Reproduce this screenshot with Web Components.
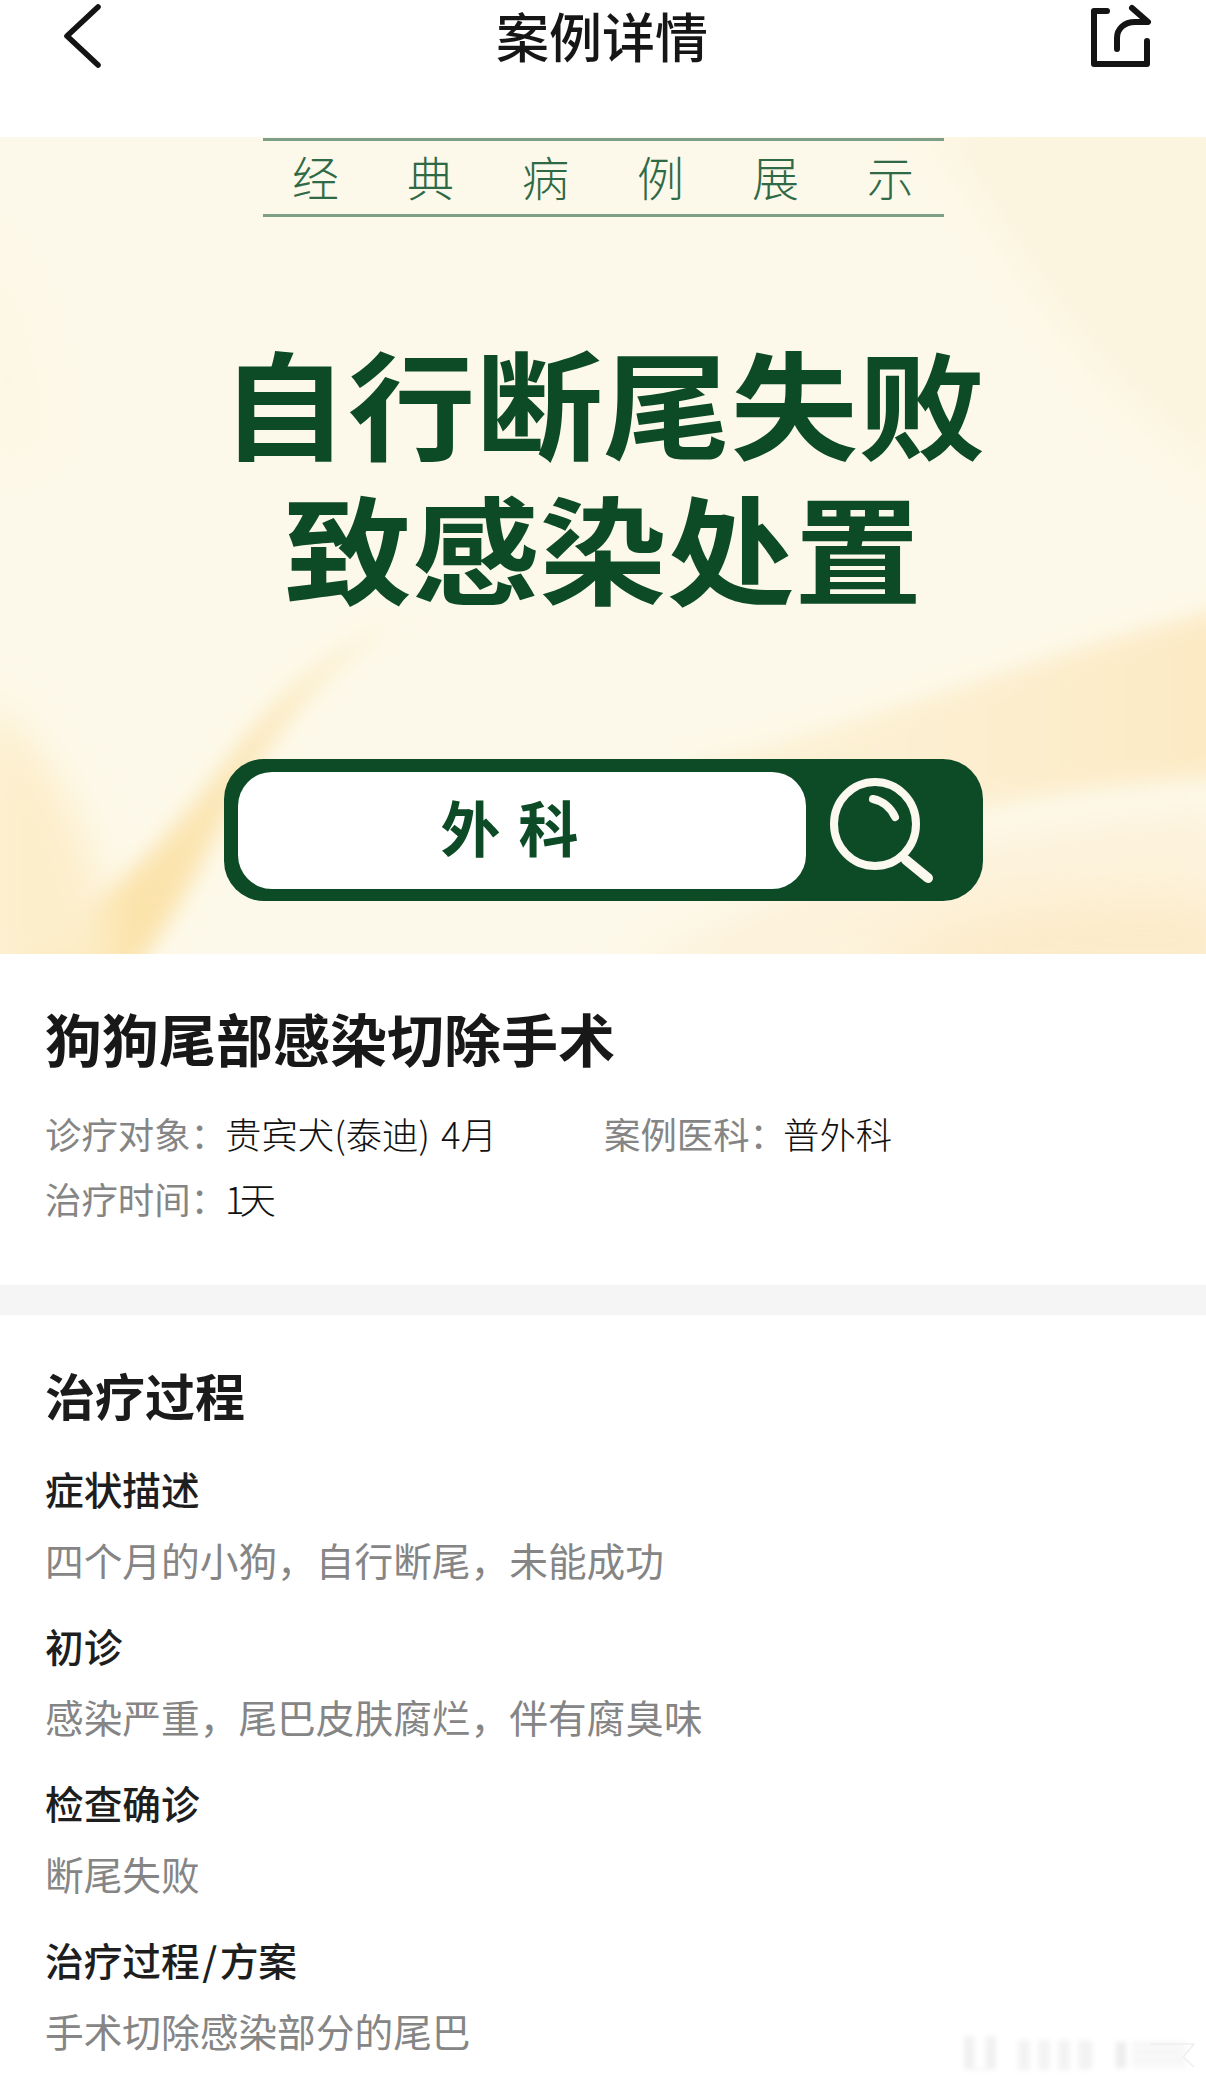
<!DOCTYPE html>
<html lang="zh-CN">
<head>
<meta charset="utf-8">
<title>案例详情</title>
<style>
html,body{margin:0;padding:0;background:#fff}
body{width:1206px;height:2082px;overflow:hidden;position:relative;font-family:"Noto Sans CJK SC","Noto Sans",sans-serif;color:#1c1c1c}
</style>
</head>
<body>
<case-page>
  <top-bar>案例详情</top-bar>
  <case-banner></case-banner>
  <case-summary title-text="狗狗尾部感染切除手术"></case-summary>
  <section-gap></section-gap>
  <treat-process heading="治疗过程">
    <treat-item heading="症状描述">四个月的小狗，自行断尾，未能成功</treat-item>
    <treat-item heading="初诊">感染严重，尾巴皮肤腐烂，伴有腐臭味</treat-item>
    <treat-item heading="检查确诊">断尾失败</treat-item>
    <treat-item heading="治疗过程&#8202;/&#8202;方案">手术切除感染部分的尾巴</treat-item>
  </treat-process>
  <ghost-mark></ghost-mark>
</case-page>
<script>
function def(name, html, init){
  customElements.define(name, class extends HTMLElement{
    constructor(){super();this.attachShadow({mode:'open'}).innerHTML=html;}
    connectedCallback(){ if(init) init(this); }
  });
}
def('case-page',`<style>:host{display:flex;flex-direction:column;width:1206px;height:2082px;position:relative;overflow:hidden}</style><slot></slot>`);

def('top-bar',`<style>
:host{display:flex;justify-content:space-between;align-items:flex-start;height:137px;box-sizing:border-box;padding:0 46px 0 50px;position:relative;background:#fff}
svg{display:block;flex:none}
.t{font-size:53px;line-height:70px;font-weight:500;color:#161616;white-space:nowrap;flex:1;text-align:center;padding-left:4px;box-sizing:border-box}
</style>
<svg width="70" height="75" viewBox="50 0 70 75" fill="none" stroke="#141414" stroke-width="5.6" stroke-linecap="round" stroke-linejoin="round"><path d="M98 7 L67 36 L98 65"/></svg>
<div class="t"><slot></slot></div>
<svg width="80" height="75" viewBox="1080 0 80 75" fill="none" stroke="#141414" stroke-width="6" stroke-linecap="round" stroke-linejoin="round"><path d="M1107 11 H1094 V64 H1147 V41"/><path d="M1132 8 L1148 22 H1135 C1124 22 1117 29 1117 38 V49"/></svg>`);

def('case-banner',`<style>
:host{display:flex;flex-direction:column;align-items:center;height:817px;position:relative;overflow:hidden;background:#fdf9ea}
.bg{position:absolute;inset:0;width:100%;height:100%}
.in{position:relative;display:flex;flex-direction:column;align-items:center;width:100%}
.sub{margin-top:1px;width:681px;height:79px;box-sizing:border-box;border-top:3px solid #7d9f88;border-bottom:3px solid #7d9f88;display:flex;justify-content:center;align-items:center;gap:68px;font-size:47px;line-height:60px;color:#2f6a47;font-weight:300;padding-bottom:4px}
.big{margin-top:110px;display:flex;flex-direction:column;align-items:center;font-size:127.5px;line-height:145px;font-weight:700;color:#0d4b27;white-space:nowrap}
.big span{display:block;transform:scaleY(.92)}
.pill{margin-top:142px;width:759px;height:142px;box-sizing:border-box;padding:13px 14px;background:#0d4b27;border-radius:40px;display:flex;align-items:stretch}
.box{width:568px;height:117px;background:#fff;border-radius:34px;display:flex;align-items:center;justify-content:center;gap:18px;font-size:60px;font-weight:700;color:#0d4b27;line-height:107px;padding:0 24px 10px 0;box-sizing:border-box}
.mag{display:block;margin-left:17px;margin-top:2px}
</style>
<svg class="bg" viewBox="0 0 1206 817" preserveAspectRatio="none">
<defs>
<filter id="b1" x="-40%" y="-40%" width="180%" height="180%"><feGaussianBlur stdDeviation="22"/></filter>
<filter id="b2" x="-30%" y="-30%" width="160%" height="160%"><feGaussianBlur stdDeviation="11"/></filter>
<linearGradient id="g1" x1="0" y1="1" x2="1" y2="0"><stop offset="0" stop-color="#fbdf9f"/><stop offset=".6" stop-color="#fbe6b6"/><stop offset="1" stop-color="#fcf0d2"/></linearGradient>
<linearGradient id="g2" x1="0" y1="0" x2="1" y2="0"><stop offset="0" stop-color="#fdf3d9"/><stop offset="1" stop-color="#fce7bd"/></linearGradient>
</defs>
<path d="M920 -20 C1010 100 1060 230 1230 350 V-20Z" fill="#fbf4de" filter="url(#b1)"/>
<path d="M-20 100 C20 140 30 220 50 300 L-20 330Z" fill="#fcf4da" filter="url(#b1)" opacity=".45"/>
<path d="M-20 840 C90 790 170 700 230 620 C290 540 350 500 400 485 C320 530 260 610 205 720 C175 780 150 810 130 840Z" fill="url(#g1)" filter="url(#b2)"/>
<path d="M-20 560 C60 620 90 680 120 840 H-20Z" fill="#fdeecb" filter="url(#b1)"/>
<path d="M680 625 C860 590 1030 520 1230 470 V640 C1050 650 900 680 800 730 C770 680 730 650 680 625Z" fill="url(#g2)" filter="url(#b2)" opacity=".85"/>
<path d="M620 840 C760 740 980 690 1230 670 V840Z" fill="#fdf2da" filter="url(#b1)"/>
<path d="M860 840 C950 770 1080 760 1230 770 V840Z" fill="#fbe9c4" filter="url(#b1)" opacity=".8"/>
</svg>
<div class="in">
  <div class="sub"><span>经</span><span>典</span><span>病</span><span>例</span><span>展</span><span>示</span></div>
  <div class="big"><span>自行断尾失败</span><span>致感染处置</span></div>
  <div class="pill">
    <div class="box"><span>外</span><span>科</span></div>
    <svg class="mag" width="112" height="116" viewBox="0 0 112 116" fill="none" stroke="#fbf8ef" stroke-linecap="round"><ellipse cx="52" cy="50" rx="41" ry="42" stroke-width="8"/><path d="M83 86 L105 104" stroke-width="10"/><path d="M50 25 C60 27 68 34 72 43" stroke-width="8"/></svg>
  </div>
</div>`);

def('case-summary',`<style>
:host{display:block;height:331px;box-sizing:border-box;padding:48px 45px 0;background:#fff}
h1{margin:0;font-size:57px;line-height:70px;font-weight:700;color:#181818;white-space:nowrap}
.grid{margin-top:29px;display:grid;grid-template-columns:559px auto;grid-auto-rows:65px;font-size:36.4px;line-height:65px}
.f{display:flex;white-space:nowrap}
.l{width:180px;flex:none;color:#858585;font-weight:400}
.l2{width:179px}
.v{color:#111;font-weight:300;word-spacing:3px}
.n{letter-spacing:-5px}
</style>
<h1 id="h"></h1>
<div class="grid">
  <div class="f"><span class="l">诊疗对象：</span><span class="v">贵宾犬(泰迪) 4月</span></div>
  <div class="f"><span class="l l2">案例医科：</span><span class="v">普外科</span></div>
  <div class="f"><span class="l">治疗时间：</span><span class="v"><span class="n">1</span>天</span></div>
</div>`, el=>{el.shadowRoot.getElementById('h').textContent=el.getAttribute('title-text');});

def('section-gap',`<style>:host{display:block;height:30px;background:#f5f5f5}</style>`);

def('treat-process',`<style>
:host{display:flex;flex-direction:column;box-sizing:border-box;padding:44px 45px 0;background:#fff;gap:26px}
h2{margin:0 0 3px;font-size:50px;line-height:70px;font-weight:700;color:#1b1b1b}
</style>
<h2 id="h"></h2><slot></slot>`, el=>{el.shadowRoot.getElementById('h').textContent=el.getAttribute('heading');});

def('treat-item',`<style>
:host{display:flex;flex-direction:column;gap:11px}
h3{margin:0;font-size:38.7px;line-height:60px;font-weight:500;color:#1e1e1e;white-space:nowrap}
.b{font-size:38.7px;line-height:60px;color:#858585;font-weight:400;white-space:nowrap}
</style>
<h3 id="h"></h3><div class="b"><slot></slot></div>`, el=>{el.shadowRoot.getElementById('h').textContent=el.getAttribute('heading');});

def('ghost-mark',`<style>
:host{position:absolute;right:0;bottom:0;width:246px;height:62px;overflow:hidden;display:block}
.bars{position:absolute;left:0;top:14px;width:240px;height:36px;filter:blur(2.5px);opacity:.4;
background:
 linear-gradient(#fff,#fff) 14px 0/12px 34px no-repeat,
 linear-gradient(#dcdcdc,#dcdcdc) 4px 2px/32px 34px no-repeat,
 repeating-linear-gradient(90deg,#e2e2e2 0 12px,transparent 12px 20px) 58px 6px/72px 30px no-repeat,
 linear-gradient(#d2d2d2,#d2d2d2) 124px 8px/8px 26px no-repeat,
 linear-gradient(#d2d2d2,#d2d2d2) 156px 8px/10px 26px no-repeat,
 repeating-linear-gradient(#e4e4e4 0 4px,#f7f7f7 4px 8px) 172px 8px/54px 26px no-repeat}
svg{position:absolute;left:0;top:0}
</style><div class="bars"></div>
<svg width="246" height="62" viewBox="0 0 246 62" fill="none" stroke="#efefef" stroke-width="1.5"><path d="M190 24 H234 L224 36 M222 36 L234 47"/></svg>`);
</script>
</body>
</html>
